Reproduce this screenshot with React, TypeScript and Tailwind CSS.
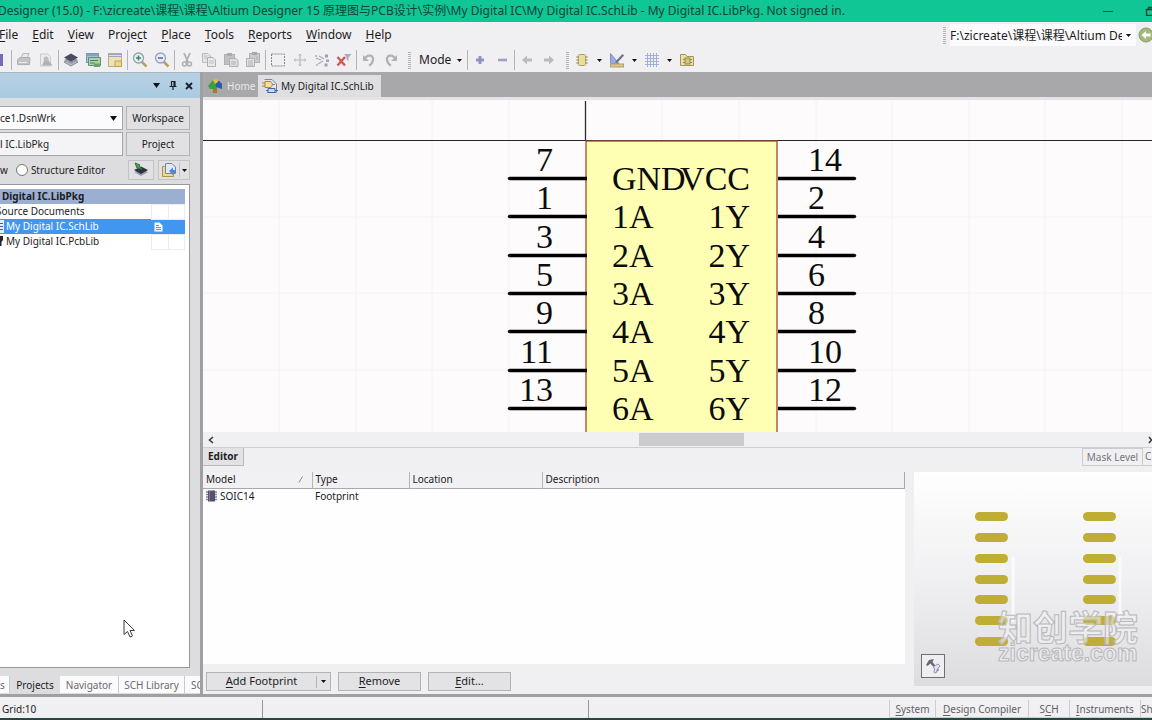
import React from "react";

type Kids = { children?: React.ReactNode };

function Icon({ children }: Kids) {
  return (
    <svg width="16" height="16" viewBox="0 0 16 16" fill="none" aria-hidden="true" className="shrink-0">
      {children}
    </svg>
  );
}

function Tool({ label, children }: Kids & { label: string }) {
  return (
    <button type="button" aria-label={label} className="flex h-5 w-[22px] shrink-0 items-center justify-center">
      <Icon>{children}</Icon>
    </button>
  );
}

function Sep() {
  return <span className="mx-px h-5 w-px shrink-0 bg-[#b4b3b6]" />;
}

function Grip() {
  return (
    <svg width="3" height="17" aria-hidden="true" className="shrink-0">
      <path d="M1.5 0V17" stroke="#b3b2b5" strokeWidth="3" strokeDasharray="1 1" />
    </svg>
  );
}

function Caret({ big = false }: { big?: boolean }) {
  return (
    <svg width={big ? 7 : 5} height={big ? 5 : 3} viewBox="0 0 5 3" preserveAspectRatio="none" aria-hidden="true" className="shrink-0">
      <path d="M0 0H5L2.5 3Z" fill="#111" />
    </svg>
  );
}

function Drop({ label }: { label: string }) {
  return (
    <button type="button" aria-label={label} className="flex h-5 w-[13px] shrink-0 items-center justify-center">
      <Caret />
    </button>
  );
}

/* A label whose access key is underlined. */
function Key({ text, at = 0 }: { text: string; at?: number }) {
  return (
    <span>
      {text.slice(0, at)}
      <span className="underline underline-offset-2">{text[at]}</span>
      {text.slice(at + 1)}
    </span>
  );
}

const menus: [string, number][] = [
  ["Edit", 0],
  ["View", 0],
  ["Project", 5],
  ["Place", 0],
  ["Tools", 0],
  ["Reports", 0],
  ["Window", 0],
  ["Help", 0],
];

function MenuBar() {
  return (
    <div className="flex h-[26px] shrink-0 items-center">
      <nav className="-ml-px flex gap-3.5 text-[12px] leading-4 text-[#1c1c1e]">
        <button type="button"><Key text="File" /></button>
        {menus.map(([text, at]) => (
          <button type="button" key={text}><Key text={text} at={at} /></button>
        ))}
      </nav>
      <div className="ml-auto flex items-center">
        <Grip />
        <div className="ml-1 flex h-[22px] w-[186px] items-center bg-[#fbfafc]">
          <input
            aria-label="Document path"
            defaultValue="F:\zicreate\课程\课程\Altium Designer"
            className="h-[22px] w-[172px] min-w-0 bg-transparent text-[12px] text-[#1c1c1e] outline-none"
          />
          <button type="button" aria-label="Recent documents" className="flex h-5 w-[13px] items-center justify-center"><Caret /></button>
        </div>
        <button type="button" aria-label="Back" className="ml-0.5 w-[14px] overflow-hidden">
          <Icon>
            <circle cx="8" cy="8" r="7" fill="#a3b87c" stroke="#8a9d68" />
            <path d="M3.500 8L8 4V6.500H12.500V9.500H8V12Z" fill="#fff" />
          </Icon>
        </button>
      </div>
    </div>
  );
}

function ToolBar() {
  return (
    <div className="flex h-6 shrink-0 items-center">
      <button type="button" aria-label="Save" className="flex w-2.5 justify-end overflow-hidden pr-1.5">
        <Icon>
          <rect x="1" y="2" width="14" height="12" fill="#7a68b8" />
          <rect x="4" y="8" width="8" height="6" fill="#d8d2ee" />
        </Icon>
      </button>
      <Sep />
      <Tool label="Print">
        <path d="M5 6L7 1.500H13L11 6" fill="#e8e7ea" stroke="#b9b8bc" />
        <path d="M1.500 7.500L4 5.500H14L13.500 12.500H1.500Z" fill="#c3c2c6" stroke="#b0afb3" />
        <path d="M3 10.500H11M3 13.500H12" stroke="#e9e8eb" />
      </Tool>
      <Tool label="Print preview">
        <path d="M2.500 2H10L12.500 4.500V14H2.500Z" fill="#ebeaed" stroke="#cccbcf" />
        <path d="M4 13.500L8 5L14.500 13.500Z" fill="#b0afb3" />
        <circle cx="8" cy="7" r="2.500" fill="#bdbcc0" />
      </Tool>
      <Sep />
      <Tool label="Layers">
        <path d="M1 10L8 6L15 10L8 14Z" fill="#b9bac4" stroke="#8c8d99" />
        <path d="M1 8L8 4L15 8L8 12Z" fill="#9597a5" />
        <path d="M1 5.500L8 1.500L15 5.500L8 9.500Z" fill="#4a4d60" />
      </Tool>
      <Tool label="Cascade documents">
        <rect x="1.500" y="1.500" width="12" height="9" fill="#a5c3dc" stroke="#7398b8" />
        <path d="M2 3H13" stroke="#5f86ad" />
        <path d="M3.500 5.500H15.500V13.500H3.500Z" fill="#aed3ab" stroke="#5f9070" />
        <path d="M5 8.500H13M5 11H10" stroke="#4d8063" />
        <path d="M9 11.500H15V15H9Z" fill="#6aa274" />
      </Tool>
      <Tool label="Documents panel">
        <rect x="1.500" y="1.500" width="13" height="13" fill="#ece4b8" stroke="#b9ae88" />
        <path d="M1 2.500H15M1 4.500H15" stroke="#9aa7bd" />
        <path d="M8 9H14.500V14.500H8Z" fill="#ead88d" stroke="#b7a25a" />
      </Tool>
      <Sep />
      <Tool label="Zoom in">
        <path d="M9.500 9.500L14.500 14.500" stroke="#b9a060" strokeWidth="2.500" />
        <circle cx="6.500" cy="6" r="5" fill="#e8f0f7" stroke="#8fa0b6" strokeWidth="1.300" />
        <path d="M4 6H9M6.500 3.500V8.500" stroke="#3c8a4f" strokeWidth="1.500" />
      </Tool>
      <Tool label="Zoom out">
        <path d="M9.500 9.500L14.500 14.500" stroke="#b9a060" strokeWidth="2.500" />
        <circle cx="6.500" cy="6" r="5" fill="#e8ecf7" stroke="#989fba" strokeWidth="1.300" />
        <path d="M4 6H9" stroke="#5560a0" strokeWidth="1.500" />
      </Tool>
      <Sep />
      <Tool label="Cut">
        <path d="M5 1L9 10M11 1L7 10" stroke="#afaeb2" strokeWidth="1.800" />
        <circle cx="5.500" cy="12" r="2" stroke="#afaeb2" strokeWidth="1.500" />
        <circle cx="10.500" cy="12" r="2" stroke="#afaeb2" strokeWidth="1.500" />
      </Tool>
      <Tool label="Copy">
        <path d="M1.500 1.500H7L9.500 4V10.500H1.500Z" fill="#e4e3e6" stroke="#bbbabe" />
        <path d="M6.500 5.500H12L14.500 8V14.500H6.500Z" fill="#e9e8eb" stroke="#b0afb3" />
        <path d="M8 9H13M8 11H13M3 4H6M3 6H6" stroke="#bfbec2" />
      </Tool>
      <Tool label="Paste">
        <rect x="1.500" y="2.500" width="10" height="10" fill="#c1c0c4" stroke="#b0afb3" />
        <rect x="4" y="1" width="5" height="3" fill="#abaaae" />
        <path d="M6.500 6.500H13L15 8.500V14.500H6.500Z" fill="#dddce0" stroke="#b0afb3" />
        <path d="M8 10H13M8 12H13" stroke="#b4b3b7" />
      </Tool>
      <Tool label="Rubber stamp">
        <rect x="4.500" y="1.500" width="10" height="9" fill="#cccbcf" stroke="#b0afb3" />
        <rect x="7" y="0" width="5" height="3" fill="#a8a7ab" />
        <path d="M1.500 6.500H9.500V14.500H1.500Z" fill="#e2e1e4" stroke="#b0afb3" />
        <path d="M3 9H8M3 11H8M3 13H8M11 5H13M11 7H13" stroke="#b0afb3" />
      </Tool>
      <Sep />
      <Tool label="Select area">
        <rect x="1.500" y="2" width="13" height="12" stroke="#85848a" strokeDasharray="2 1" />
      </Tool>
      <Tool label="Move selection">
        <path d="M8 2V14M2 8H14" stroke="#b8b7bc" strokeWidth="1.200" />
        <path d="M6.500 3.500L8 2L9.500 3.500M6.500 12.500L8 14L9.500 12.500M3.500 6.500L2 8L3.500 9.500M12.500 6.500L14 8L12.500 9.500" stroke="#b8b7bc" />
      </Tool>
      <Tool label="Deselect all">
        <path d="M1 4H3M2 6L7 8M5 4L10 7M4 12L9 9M2 13H4" stroke="#aeadb4" strokeWidth="1.300" />
        <path d="M11 2.500H14V5.500H11ZM12 7.500H15V10H12ZM10.500 11.500H13.500V14.500H10.500Z" fill="#9da0b8" />
      </Tool>
      <Tool label="Clear filter">
        <path d="M1.500 5L9 13.500M9 5L1.500 13.500" stroke="#d25552" strokeWidth="2.300" />
        <path d="M8 2H15.500L12.500 5.500V9L10.500 7.500V5Z" fill="#a9acbc" />
      </Tool>
      <Sep />
      <Tool label="Undo">
        <path d="M4 6.500C6 2 13 3 12 8C11.500 11 10 12.500 8 13.500" stroke="#b2b1b5" strokeWidth="2.200" />
        <path d="M2 3V9H8Z" fill="#b2b1b5" />
      </Tool>
      <Tool label="Redo">
        <path d="M12 6.500C10 2 3 3 4 8C4.500 11 6 12.500 8 13.500" stroke="#b2b1b5" strokeWidth="2.200" />
        <path d="M14 3V9H8Z" fill="#b2b1b5" />
      </Tool>
      <span className="ml-1.5 flex"><Grip /></span>
      <button type="button" className="ml-2 mr-1 flex items-center gap-1.5 text-[12px] text-[#1c1c1e]">
        Mode <Caret />
      </button>
      <Sep />
      <Tool label="Add mode">
        <path d="M8 4V12M4 8H12" stroke="#8c94c2" strokeWidth="3" />
      </Tool>
      <Tool label="Remove mode">
        <path d="M4 8H13" stroke="#9ba2c9" strokeWidth="2.600" />
      </Tool>
      <Sep />
      <Tool label="Previous">
        <path d="M3 8L8 3.500V6.500H13V9.500H8V12.500Z" fill="#bbbabe" />
      </Tool>
      <Tool label="Next">
        <path d="M13 8L8 3.500V6.500H3V9.500H8V12.500Z" fill="#bbbabe" />
      </Tool>
      <span className="ml-1.5 flex"><Grip /></span>
      <span className="ml-0.5 flex items-center">
        <Tool label="IEEE symbols">
          <path d="M2.500 5H13.500M2.500 8H13.500M2.500 11H13.500" stroke="#9d9468" strokeWidth="1.500" />
          <rect x="4.500" y="2.500" width="7" height="11" rx="1" fill="#e9dd9e" stroke="#ada26c" />
        </Tool>
        <Drop label="IEEE symbols menu" />
        <Tool label="Drawing tools">
          <path d="M1.500 1.500V11.500H10Z" fill="#9aaee0" stroke="#8292c6" />
          <path d="M6 10L13.500 2L15 3.500L8 11Z" fill="#6c7080" />
          <rect x="1.500" y="12" width="13" height="3" fill="#d9c78c" stroke="#b5a066" />
        </Tool>
        <Drop label="Drawing tools menu" />
        <Tool label="Grids">
          <path d="M3.500 1V15M6.500 1V15M9.500 1V15M12.500 1V15M1 3.500H15M1 6.500H15M1 9.500H15M1 12.500H15" stroke="#a3b0d8" />
        </Tool>
        <Drop label="Grids menu" />
        <Tool label="Model manager">
          <path d="M1.500 2.500V13.500H14.500V4.500H8L6.500 2.500H1.500Z" fill="#eae0a4" stroke="#a0965f" />
          <rect x="6" y="6" width="5" height="6" fill="#d2c67c" stroke="#948a54" />
          <path d="M4 7.500H6M4 10.500H6M11 7.500H13M11 10.500H13" stroke="#948a54" />
        </Tool>
      </span>
    </div>
  );
}

const sideButton =
  "flex h-6 w-16 shrink-0 items-center justify-center border border-[#b3b2b5] bg-[#e1e0e2] text-[10px] text-[#1c1c1e]";

function TreeRow({ name, tone = "", doc = false, icon }: { name: string; tone?: string; doc?: boolean; icon?: React.ReactNode }) {
  return (
    <tr className={"h-[15px] " + tone}>
      <td className="overflow-hidden p-0">
        <span className="flex items-center whitespace-nowrap leading-[15px]">
          {icon}
          {name}
        </span>
      </td>
      <td className={"w-[17px] p-0 " + (tone ? "" : "border border-[#ececee]")}>
        {doc && (
          <svg width="9" height="10" viewBox="0 0 9 10" aria-label="Open" className="ml-0.5">
            <path d="M0.500 0.500H5.500L8.500 3.500V9.500H0.500Z" fill="#fff" />
            <path d="M2 3.500H5M2 5.500H7M2 7.500H7" stroke="#3f97f0" />
          </svg>
        )}
      </td>
      <td className={"w-4 p-0 " + (tone ? "" : "border border-[#ececee]")} />
    </tr>
  );
}

function Sidebar() {
  return (
    <aside className="flex w-[200px] shrink-0 flex-col overflow-hidden bg-[#dddcde] text-[10px] text-[#1c1c1e]">
      <div className="flex h-[26px] shrink-0 items-center justify-end gap-2 border-t border-[#a7b5c2] bg-linear-to-b from-[#b9d0e4] to-[#a9cbe0] pr-[7px]">
        <button type="button" aria-label="Panel menu" className="flex w-2"><Caret big /></button>
        <button type="button" aria-label="Pin panel">
          <svg width="8" height="9" viewBox="0 0 8 9" aria-hidden="true">
            <path d="M2 0.500H6M2.500 0V5M5 0V5M6 0V5M0.500 5.500H7.500M4 5V9" stroke="#17202c" strokeWidth="1.200" />
          </svg>
        </button>
        <button type="button" aria-label="Close panel">
          <svg width="8" height="8" viewBox="0 0 8 8" aria-hidden="true">
            <path d="M1 1L7 7M7 1L1 7" stroke="#17202c" strokeWidth="1.800" />
          </svg>
        </button>
      </div>
      <div className="flex min-h-0 flex-1 flex-col pr-2.5 pt-2">
        <div className="flex gap-[3px]">
          <div className="relative min-w-0 flex-1">
            <select aria-label="Workspace file" className="h-6 w-full appearance-none border border-l-0 border-[#a5a4a8] bg-[#fbfafc] text-[10px] outline-none">
              <option>ce1.DsnWrk</option>
            </select>
            <span className="pointer-events-none absolute right-1.5 top-2.5"><Caret big /></span>
          </div>
          <button type="button" className={sideButton}>Workspace</button>
        </div>
        <div className="mt-0.5 flex gap-[3px]">
          <input aria-label="Project file" defaultValue="l IC.LibPkg" className="h-6 min-w-0 flex-1 border border-l-0 border-[#a5a4a8] bg-[#f4f3f5] outline-none" />
          <button type="button" className={sideButton}>Project</button>
        </div>
        <div className="mt-1 flex h-5 items-center">
          <span>w</span>
          <label className="ml-2 flex items-center gap-[3px] whitespace-nowrap">
            <input type="radio" name="view" className="size-3 appearance-none rounded-full border border-[#77767a] bg-white" />
            Structure Editor
          </label>
          <button type="button" aria-label="Compile" className="ml-auto flex h-5 w-[26px] items-center justify-center border border-[#c3c2c5] bg-[#e1e0e2]">
            <Icon>
              <path d="M1 10L8 7L15 10L8 14Z" fill="#9a9ca8" />
              <path d="M1 8L8 4.500L15 8L8 12Z" fill="#2e3343" />
              <path d="M2 1L7 3L6 4L9 7L4 6Z" fill="#4fa04c" stroke="#2f7a3a" />
            </Icon>
          </button>
          <div className="ml-1 flex h-5 w-8 items-center border border-[#c3c2c5] bg-[#e1e0e2]">
            <button type="button" aria-label="Document options" className="flex w-5 justify-center">
              <Icon>
                <path d="M1.500 4.500H7L8 6H12.500V14.500H1.500Z" fill="#efd98a" stroke="#b29443" />
                <path d="M4.500 1.500H11L14.500 5V11.500H4.500Z" fill="#dfe8f7" stroke="#6e86b5" />
                <path d="M8 9L12 5.500V8H15V11H12V13Z" fill="#5b83cf" />
              </Icon>
            </button>
            <span className="h-3.5 w-px bg-[#c0bfc2]" />
            <button type="button" aria-label="More document options" className="flex w-[9px] justify-center"><Caret /></button>
          </div>
        </div>
        <div className="mt-1 min-h-0 flex-1 border border-l-0 border-[#98979b] bg-white pr-1 pt-1">
          <table className="w-full table-fixed border-collapse">
            <colgroup>
              <col />
              <col className="w-[17px]" />
              <col className="w-4" />
            </colgroup>
            <tbody>
              <TreeRow name="Digital IC.LibPkg" tone="bg-[#9bafd2] font-bold" icon={<span className="w-0.5" />} />
              <TreeRow name="Source Documents" icon={<span className="-ml-1" />} />
              <TreeRow
                name="My Digital IC.SchLib"
                tone="bg-[#3f97f0] text-white"
                doc
                icon={
                  <svg width="6" height="13" aria-hidden="true" className="shrink-0">
                    <rect width="4" height="13" fill="#e8eefb" />
                    <path d="M0 3.500H3M0 6.500H3M0 9.500H3" stroke="#3d5fae" />
                  </svg>
                }
              />
              <TreeRow
                name="My Digital IC.PcbLib"
                icon={
                  <svg width="6" height="13" aria-hidden="true" className="shrink-0">
                    <path d="M0 1H3V5L1.500 7V11H0Z" fill="#23262e" />
                  </svg>
                }
              />
            </tbody>
          </table>
        </div>
      </div>
      <div className="mb-px mt-2 flex h-[17px] shrink-0 whitespace-nowrap text-[#6b6a6e]">
        <button type="button" className="w-[10px] border-r border-[#c9c8cb] bg-[#fbfafc] text-left leading-4">s</button>
        <button type="button" className="w-[50px] leading-4 text-[#1c1c1e]">Projects</button>
        <button type="button" className="w-[59px] border-r border-[#c9c8cb] bg-[#fbfafc] leading-4">Navigator</button>
        <button type="button" className="w-[66px] border-r border-[#c9c8cb] bg-[#fbfafc] leading-4">SCH Library</button>
        <button type="button" className="min-w-0 flex-1 overflow-hidden bg-[#fbfafc] pl-1.5 text-left leading-4">SC</button>
      </div>
    </aside>
  );
}

const pins = [
  { y: 78, left: "7", a: "GND", b: "VCC", right: "14" },
  { y: 116, left: "1", a: "1A", b: "1Y", right: "2" },
  { y: 155, left: "3", a: "2A", b: "2Y", right: "4" },
  { y: 193, left: "5", a: "3A", b: "3Y", right: "6" },
  { y: 231, left: "9", a: "4A", b: "4Y", right: "8" },
  { y: 270, left: "11", a: "5A", b: "5Y", right: "10" },
  { y: 308, left: "13", a: "6A", b: "6Y", right: "12" },
];

function Schematic() {
  return (
    <div className="min-h-0 flex-1 overflow-hidden bg-[#fefbfc]">
      <svg width="100%" height="100%" className="block" fontFamily="'Liberation Serif', serif" fontSize="34" aria-label="Schematic symbol">
        <path
          d="M76 0V332M153 0V332M229 0V332M306 0V332M459 0V332M536 0V332M613 0V332M689 0V332M766 0V332M842 0V332M919 0V332M0 117H949M0 193H949M0 270H949"
          stroke="#f6f2f3"
        />
        <line x1="0" y1="40.500" x2="100%" y2="40.500" stroke="#2b2326" />
        <path d="M382.500 1V41" stroke="#2b2b33" strokeWidth="1.300" />
        <rect x="383" y="41" width="191" height="400" fill="#ffffb3" stroke="#9a4a32" strokeWidth="1.300" />
        {pins.map((p) => (
          <g key={p.left} fill="#0c0c0c">
            <path d={`M307 ${p.y + 0.5}H384M575 ${p.y + 0.5}H651`} stroke="#000" strokeWidth="3.400" />
            <circle cx="306.500" cy={p.y + 0.5} r="1.700" />
            <circle cx="651.500" cy={p.y + 0.5} r="1.700" />
            <text x="350" y={p.y - 7} textAnchor="end">{p.left}</text>
            <text x="409" y={p.y + 12}>{p.a}</text>
            <text x="547" y={p.y + 12} textAnchor="end">{p.b}</text>
            <text x="605" y={p.y - 7}>{p.right}</text>
          </g>
        ))}
      </svg>
    </div>
  );
}

const padRows = [44, 65, 86, 107, 127, 148, 169];

function FootprintPreview() {
  return (
    <div className="relative ml-[9px] mb-2 min-w-0 flex-1 bg-linear-to-b from-white via-[#f0eff1] to-[#dddcde]">
      <svg width="100%" height="100%" className="absolute inset-0" aria-label="Footprint preview">
        <path d="M99 85V150M206 85V150" stroke="#fff" strokeWidth="3" opacity="0.700" />
        {padRows.map((y) => (
          <g key={y} fill="#bfae33">
            <rect x="61" y={y - 4} width="33" height="9" rx="4.500" />
            <rect x="169" y={y - 4} width="33" height="9" rx="4.500" />
          </g>
        ))}
        <g fill="#f4f3f5" fillOpacity="0.550" stroke="#b9b8bb" strokeWidth="1" fontWeight="700">
          <text x="84" y="169" fontSize="35" fontFamily="'Noto Sans CJK SC', sans-serif">知创学院</text>
          <text x="84" y="189" fontSize="23" fontFamily="'Liberation Sans', sans-serif">zicreate.com</text>
        </g>
      </svg>
      <button type="button" aria-label="Preview tools" className="absolute bottom-2 left-[7px] flex size-6 items-center justify-center border border-[#6f6e73] bg-[#efeef0]">
        <Icon>
          <path d="M1 7L4 2L9 1L7.500 4L14 12L12 13.500L5.500 5.500L2.500 8Z" fill="#6b6a70" />
          <path d="M8.500 8.500L13 6L15 8L12.500 11L11 15L9 14.500L9.500 11Z" fill="#e5e5ef" stroke="#9294ac" />
        </Icon>
      </button>
    </div>
  );
}

const flatButton = "flex h-[19px] items-center justify-center border border-[#b3b2b5] bg-[#e3e2e4] text-[11px]";

function ModelPane() {
  return (
    <div className="flex h-[222px] shrink-0 text-[10px] text-[#1c1c1e]">
      <div className="flex w-[702px] shrink-0 flex-col">
        <div className="h-[192px] bg-[#fefdff]">
          <table className="w-full table-fixed border-collapse text-left">
            <colgroup>
              <col className="w-[109px]" />
              <col className="w-[97px]" />
              <col className="w-[133px]" />
              <col />
            </colgroup>
            <thead>
              <tr className="h-4 border-b border-[#a9a8ac] bg-[#f1f0f2]">
                <th className="border-r border-[#b5b4b8] p-0 pl-[3px] font-normal leading-[15px]">
                  <span className="flex items-center justify-between pr-2">
                    Model
                    <svg width="6" height="7" aria-hidden="true"><path d="M1 6.500L4.500 0.500" stroke="#8a898d" /></svg>
                  </span>
                </th>
                <th className="border-r border-[#b5b4b8] p-0 pl-[3px] font-normal leading-[15px]">Type</th>
                <th className="border-r border-[#b5b4b8] p-0 pl-[3px] font-normal leading-[15px]">Location</th>
                <th className="border-r border-[#a9a8ac] p-0 pl-[3px] font-normal leading-[15px]">Description</th>
              </tr>
            </thead>
            <tbody>
              <tr className="h-[15px]">
                <td className="p-0 pl-[3px]">
                  <span className="flex items-center gap-[3px] leading-[15px]">
                    <svg width="11" height="12" viewBox="0 0 11 12" aria-hidden="true">
                      <path d="M0 2H11M0 4.500H11M0 7H11M0 9.500H11" stroke="#8481a3" strokeWidth="1.300" />
                      <rect x="2" y="0.500" width="7" height="11" fill="#55516f" />
                      <path d="M3.500 1V11" stroke="#7d799c" />
                    </svg>
                    SOIC14
                  </span>
                </td>
                <td className="p-0 pl-[3px] leading-[15px]">Footprint</td>
                <td />
                <td />
              </tr>
            </tbody>
          </table>
        </div>
        <div className="mt-2 flex gap-[7px] pl-[3px]">
          <div className={flatButton + " w-[125px]"}>
            <button type="button" className="flex-1"><Key text="Add Footprint" /></button>
            <span className="h-3 w-px bg-[#b3b2b5]" />
            <button type="button" aria-label="Add model menu" className="flex h-full w-[13px] items-center justify-center"><Caret /></button>
          </div>
          <button type="button" className={flatButton + " w-[83px]"}><Key text="Remove" /></button>
          <button type="button" className={flatButton + " w-[83px]"}><Key text="Edit..." /></button>
        </div>
      </div>
      <FootprintPreview />
    </div>
  );
}

function Workspace() {
  return (
    <main className="flex min-w-0 flex-1 flex-col border-l-[3px] border-[#a09fa2] bg-[#f0eff1]">
      <div className="flex h-[25px] shrink-0 bg-[#a8a7a9] pt-[3px] text-[10px]">
        <button type="button" className="flex w-[55px] items-center gap-1 pl-1 text-[#e9e8ea]">
          <Icon>
            <path d="M6 9H10V15H6Z" fill="#b0742c" />
            <path d="M1 8L6 2L10 5L9 11L3 11Z" fill="#38a23c" />
            <path d="M8 3H12L15 6V11L9 9Z" fill="#2c57b4" />
            <path d="M6 2L10 1L11 4L8 6Z" fill="#e2c439" />
          </Icon>
          Home
        </button>
        <button type="button" className="flex w-[123px] items-center gap-[3px] whitespace-nowrap bg-[#dfdee0] pl-1 text-[#1c1c1e]">
          <Icon>
            <path d="M2.500 1.500H10L14.500 6V14.500H5" fill="#dde7f8" stroke="#6f89bd" />
            <path d="M3 3.500H8C11 3.500 11 9.500 8 9.500H3Z" fill="#f6dfa0" stroke="#b3822e" />
            <path d="M0 5H3M0 8H3M10 6.500H13" stroke="#b3822e" />
            <path d="M6 10.500H13V14.500H6Z" fill="#c9dbf5" stroke="#3f66ac" />
            <path d="M4 12.500H6M13 12.500H16" stroke="#3f66ac" />
          </Icon>
          <span>My Digital IC.SchLib</span>
        </button>
      </div>
      <div className="h-[3px] shrink-0 bg-[#e4e3e5]" />
      <Schematic />
      <div className="flex h-4 shrink-0 items-center justify-between border-b border-[#d0cfd2] pl-1">
        <svg width="8" height="8" aria-hidden="true"><path d="M6 1L2.500 4L6 7" stroke="#333" strokeWidth="1.500" fill="none" /></svg>
        <div className="ml-[424px] mr-auto h-[13px] w-[105px] bg-[#cbcacc]" />
        <svg width="4" height="8" aria-hidden="true"><path d="M1 1L3.500 4L1 7" stroke="#333" strokeWidth="1.500" fill="none" /></svg>
      </div>
      <div className="mb-[6px] flex h-[18px] shrink-0 justify-between text-[10px]">
        <button type="button" className="w-[41px] border-b border-r border-[#bbbabd] bg-[#e2e1e3] font-bold text-[#1c1c1e]">Editor</button>
        <div className="flex text-[#77767a]">
          <button type="button" className="w-[61px] whitespace-nowrap border border-[#cdccd0]">Mask Level</button>
          <button type="button" className="w-[9px] overflow-hidden border-b border-[#cdccd0] pl-0.5 text-left">C</button>
        </div>
      </div>
      <ModelPane />
    </main>
  );
}

function StatusBar() {
  return (
    <footer className="flex h-[21px] shrink-0 items-stretch bg-[#f0eff1] pt-[3px] text-[10px] text-[#1c1c1e]">
      <span className="w-[263px] border-r border-[#98979b] pl-0.5 leading-[18px]">Grid:10</span>
      <span className="w-[326px] border-r border-[#98979b]" />
      <div className="ml-auto flex whitespace-nowrap text-[#636266]">
        {[
          ["System", 0, "w-[46px]"],
          ["Design Compiler", 0, "w-[93px]"],
          ["SCH", 1, "w-[41px]"],
          ["Instruments", 0, "w-[71px]"],
        ].map(([text, at, w]) => (
          <button type="button" key={text} className={"h-[18px] border-b border-l border-[#cdccd0] leading-[18px] " + w}>
            <Key text={text as string} at={at as number} />
          </button>
        ))}
        <button type="button" className="h-[18px] w-3 overflow-hidden border-b border-l border-[#cdccd0] text-left leading-[18px]">Sh</button>
      </div>
    </footer>
  );
}

function Pointer() {
  return (
    <svg width="12" height="19" viewBox="0 0 12 19" aria-hidden="true" className="pointer-events-none absolute left-[123px] top-[619px]">
      <path d="M1 1V15.500L4.500 12.500L7 18L9.500 17L7 11.500H11.500Z" fill="#fff" stroke="#3a3a3e" />
    </svg>
  );
}

export default function App() {
  return (
    <div className="relative flex h-screen flex-col overflow-hidden bg-[#f0eff1] font-['Noto_Sans','Noto_Sans_CJK_SC',sans-serif]">
      <header className="flex h-[22px] shrink-0 items-center overflow-hidden bg-[#10c695] text-[12px] text-[#0d4536]">
        <h1 className="-ml-0.5 whitespace-nowrap">
          Designer (15.0) - F:\zicreate\课程\课程\Altium Designer 15 原理图与PCB设计\实例\My Digital IC\My Digital IC.SchLib - My Digital IC.LibPkg. Not signed in.
        </h1>
        <button type="button" aria-label="Minimize" className="ml-auto">
          <svg width="10" height="10" aria-hidden="true"><path d="M0 5.500H10" stroke="#0d5a45" /></svg>
        </button>
        <button type="button" aria-label="Maximize" className="ml-8">
          <svg width="7" height="10" aria-hidden="true"><path d="M1.500 3.500H9V9.500H1.500ZM3.500 3V1.500H9" stroke="#0d4536" strokeWidth="1.300" fill="none" /></svg>
        </button>
      </header>
      <MenuBar />
      <ToolBar />
      <div className="flex min-h-0 flex-1 border-b-[3px] border-[#a09fa2]">
        <Sidebar />
        <Workspace />
      </div>
      <StatusBar />
      <div className="h-0.5 shrink-0 bg-[#24483f]" />
      <Pointer />
    </div>
  );
}
